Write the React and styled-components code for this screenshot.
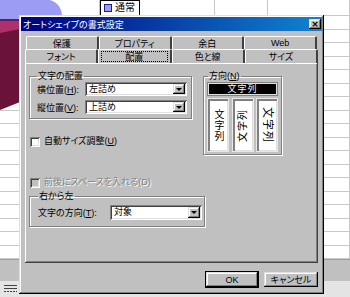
import styled, { createGlobalStyle } from 'styled-components';

const GlobalStyle = createGlobalStyle`
  html, body {
    margin: 0;
    padding: 0;
  }
  body {
    width: 350px;
    height: 297px;
    overflow: hidden;
    background: #fff;
    font-family: 'Liberation Sans', 'Noto Sans CJK JP', sans-serif;
    font-feature-settings: "palt";
  }
`;

const raised = `
  box-shadow: inset -1px -1px #000, inset 1px 1px #dfdfdf,
    inset -2px -2px #808080, inset 2px 2px #fff;
`;

const sunken = `
  box-shadow: inset 1px 1px #808080, inset -1px -1px #fff,
    inset 2px 2px #404040, inset -2px -2px #dfdfdf;
`;

const Screen = styled.div`
  position: relative;
  width: 350px;
  height: 297px;
  overflow: hidden;
  display: flex;
  flex-direction: column;
`;

const SheetGrid = styled.div`
  display: grid;
  grid-template-columns: 100px 40px 75px 53px 82px;
  grid-template-rows: 16px repeat(18, 13.5px);
`;

const Cell = styled.div`
  box-sizing: border-box;
  border-right: 1px solid #c8c8c8;
  border-bottom: 1px solid #c8c8c8;
`;

const StyleCell = styled.div`
  box-sizing: border-box;
  border: 1px solid #000;
  display: flex;
  align-items: center;
  gap: 3px;
  padding-left: 3px;
  font-size: 10px;
  line-height: 1;
  color: #000;
`;

const Swatch = styled.span`
  width: 6px;
  height: 6px;
  border: 1px solid #202080;
  background: #9c9cff;
`;

const SheetTabs = styled.div`
  height: 21px;
  background: #c0c0c0;
  border-top: 1px solid #a0a0a0;
`;

const StatusBar = styled.div`
  flex: 1;
  background: #e4e4e4;
  display: flex;
  align-items: center;
  padding-left: 4px;
`;

const ShapeLayer = styled.div`
  position: absolute;
  left: 0;
  top: 0;
  width: 64px;
  height: 120px;
  z-index: 1;
  line-height: 0;
`;

const Dialog = styled.div`
  position: absolute;
  z-index: 2;
  left: 19px;
  top: 15px;
  width: 305px;
  height: 279px;
  box-sizing: border-box;
  padding: 2px;
  background: #c0c0c0;
  display: flex;
  flex-direction: column;
  font-size: 9px;
  ${raised}
`;

const TitleBar = styled.div`
  height: 14px;
  background: linear-gradient(90deg, #000080, #1084d0);
  color: #fff;
  font-size: 9px;
  display: flex;
  align-items: center;
  justify-content: space-between;
  padding-left: 2px;
`;

const CloseButton = styled.div`
  width: 12px;
  height: 10px;
  margin-right: 1px;
  background: #c0c0c0;
  color: #000;
  font: bold 9px 'DejaVu Sans', sans-serif;
  display: flex;
  align-items: center;
  justify-content: center;
  ${raised}
`;

const Body = styled.div`
  flex: 1;
  padding: 5px 4px 0;
  display: flex;
  flex-direction: column;
`;

const TabRow = styled.div`
  display: flex;
  height: ${({ $h }) => $h}px;
  margin: 0 ${({ $inset }) => $inset}px;
`;

const Tab = styled.div`
  flex: 1;
  box-sizing: border-box;
  border-top: 1px solid #fff;
  border-left: 1px solid #fff;
  border-right: 2px solid #404040;
  border-radius: 2px 2px 0 0;
  font-size: 9px;
  color: #000;
  display: flex;
  align-items: center;
  justify-content: center;
`;

const FocusLabel = styled.span`
  box-sizing: border-box;
  width: calc(100% - 4px);
  height: 11px;
  border: 1px dotted #000;
  display: flex;
  align-items: center;
  justify-content: center;
`;

const Panel = styled.div`
  height: 200px;
  box-sizing: border-box;
  padding: 7px 4px 0;
  box-shadow: inset -1px -1px #404040, inset 1px 1px #fff,
    inset -2px -2px #808080;
  display: flex;
  flex-direction: column;
`;

const TopRow = styled.div`
  display: flex;
  gap: 11px;
  align-items: flex-start;
`;

const Column = styled.div`
  display: flex;
  flex-direction: column;
  width: ${({ $w }) => $w}px;
`;

const Group = styled.fieldset`
  margin: ${({ $mt }) => $mt || 0}px 0 0;
  min-width: 0;
  width: ${({ $w }) => $w}px;
  box-sizing: border-box;
  padding: ${({ $pad }) => $pad};
  border: 1px solid #808080;
  box-shadow: 1px 1px 0 #fff, inset 1px 1px 0 #fff;
  display: flex;
  flex-direction: column;
  gap: ${({ $gap }) => $gap || 0}px;
`;

const Legend = styled.legend`
  font-size: 9px;
  line-height: 12px;
  padding: 0 1px;
  color: #000;
`;

const FieldRow = styled.div`
  display: flex;
  align-items: center;
  height: ${({ $h }) => $h}px;
`;

const FieldLabel = styled.span`
  width: ${({ $w }) => $w}px;
  font-size: 9px;
  color: #000;
  white-space: nowrap;
`;

const Select = styled.div`
  flex: 1;
  align-self: stretch;
  box-sizing: border-box;
  padding: 2px;
  background: #fff;
  display: flex;
  align-items: center;
  ${sunken}
`;

const SelectText = styled.span`
  flex: 1;
  font-size: 9px;
  line-height: 1;
  padding-left: 2px;
  color: #000;
`;

const ArrowButton = styled.span`
  width: 12px;
  align-self: stretch;
  background: #c0c0c0;
  display: flex;
  align-items: center;
  justify-content: center;
  ${raised}
  &::after {
    content: '';
    border-left: 3px solid transparent;
    border-right: 3px solid transparent;
    border-top: 3px solid #000;
  }
`;

const CheckRow = styled.label`
  display: flex;
  align-items: center;
  gap: 4px;
  margin-top: ${({ $mt }) => $mt}px;
  margin-left: 1px;
  height: 11px;
  line-height: 11px;
  font-size: 9px;
  color: ${({ $disabled }) => ($disabled ? '#808080' : '#000')};
  text-shadow: ${({ $disabled }) => ($disabled ? '1px 1px 0 #fff' : 'none')};
`;

const CheckBox = styled.span`
  width: 10px;
  height: 10px;
  box-sizing: border-box;
  background: ${({ $disabled }) => ($disabled ? '#c0c0c0' : '#fff')};
  ${sunken}
`;

const BlackBar = styled.div`
  margin-top: 1px;
  height: 12px;
  box-sizing: border-box;
  background: #000;
  color: #fff;
  font-size: 9px;
  line-height: 1;
  border: 1px solid #dfdfdf;
  outline: 1px solid #808080;
  display: flex;
  align-items: center;
  justify-content: center;
  letter-spacing: 1px;
`;

const Orientations = styled.div`
  margin-top: 4px;
  height: 52px;
  display: flex;
  justify-content: space-between;
`;

const OrientBox = styled.div`
  width: 20px;
  box-sizing: border-box;
  background: #fff;
  display: flex;
  align-items: center;
  justify-content: center;
  box-shadow: inset 2px 2px #808080, inset -1px -1px #dfdfdf,
    0 0 0 1px #e8e8e8;
`;

const VerticalText = styled.span`
  writing-mode: vertical-rl;
  text-orientation: ${({ $upright }) => ($upright ? 'upright' : 'sideways')};
  transform: rotate(${({ $turn }) => $turn || 0}deg);
  font-size: ${({ $size }) => $size}px;
  letter-spacing: 1px;
  color: #000;
  line-height: 1;
`;

const Buttons = styled.div`
  display: flex;
  justify-content: flex-end;
  gap: 6px;
  margin-top: 9px;
`;

const Button = styled.div`
  width: ${({ $w }) => $w}px;
  height: 15px;
  box-sizing: border-box;
  background: #c0c0c0;
  font-size: 9px;
  color: #000;
  display: flex;
  align-items: center;
  justify-content: center;
  ${raised}
  outline: ${({ $default }) => ($default ? '1px solid #000' : 'none')};
`;

const rows = Array.from({ length: 19 });
const cols = Array.from({ length: 5 });

function Sheet() {
  return (
    <SheetGrid>
      {rows.map((_, r) =>
        cols.map((__, c) =>
          r === 0 && c === 1 ? (
            <StyleCell key={`${r}-${c}`}>
              <Swatch />
              通常
            </StyleCell>
          ) : (
            <Cell key={`${r}-${c}`} />
          )
        )
      )}
    </SheetGrid>
  );
}

export default function App() {
  return (
    <>
      <GlobalStyle />
      <Screen>
        <Sheet />
        <SheetTabs />
        <StatusBar>
          <svg width="13" height="9" viewBox="0 0 13 9">
            <rect x="0" y="0" width="13" height="1" fill="#404040" />
            <rect x="0" y="3" width="13" height="1" fill="#404040" />
            <path d="M0 6.5h13" stroke="#404040" strokeDasharray="2 1" />
          </svg>
        </StatusBar>

        <ShapeLayer>
          <svg width="64" height="120" viewBox="0 0 64 120">
            <path d="M0 0 H50 Q63 4 62 20 H0 Z" fill="#9c9cf4" />
            <rect x="0" y="19" width="20" height="2" fill="#5a2060" />
            <rect x="0" y="21" width="20" height="14" fill="#b0306e" />
            <path d="M0 33 L20 29 L20 102 L0 110 Z" fill="#6b1238" />
          </svg>
        </ShapeLayer>

        <Dialog>
          <TitleBar>
            オートシェイプの書式設定
            <CloseButton>×</CloseButton>
          </TitleBar>
          <Body>
            <TabRow $h={13} $inset={1}>
              <Tab>保護</Tab>
              <Tab>プロパティ</Tab>
              <Tab>余白</Tab>
              <Tab>Web</Tab>
            </TabRow>
            <TabRow $h={14} $inset={0}>
              <Tab>フォント</Tab>
              <Tab>
                <FocusLabel>配置</FocusLabel>
              </Tab>
              <Tab>色と線</Tab>
              <Tab>サイズ</Tab>
            </TabRow>
            <Panel>
              <TopRow>
                <Column $w={163}>
                  <Group $w={163} $pad="0 4px 4px 7px" $gap={4}>
                    <Legend>文字の配置</Legend>
                    <FieldRow $h={14}>
                      <FieldLabel $w={48}>横位置(<u>H</u>):</FieldLabel>
                      <Select>
                        <SelectText>左詰め</SelectText>
                        <ArrowButton />
                      </Select>
                    </FieldRow>
                    <FieldRow $h={14}>
                      <FieldLabel $w={48}>縦位置(<u>V</u>):</FieldLabel>
                      <Select>
                        <SelectText>上詰め</SelectText>
                        <ArrowButton />
                      </Select>
                    </FieldRow>
                  </Group>
                  <CheckRow $mt={17}>
                    <CheckBox />
                    <span>自動サイズ調整(<u>U</u>)</span>
                  </CheckRow>
                </Column>
                <Group $w={79} $pad="0 4px 3px 4px">
                  <Legend>方向(<u>N</u>)</Legend>
                  <BlackBar>文字列</BlackBar>
                  <Orientations>
                    <OrientBox>
                      <VerticalText $upright $size={10}>文字列</VerticalText>
                    </OrientBox>
                    <OrientBox>
                      <VerticalText $turn={180} $size={10}>文字列</VerticalText>
                    </OrientBox>
                    <OrientBox>
                      <VerticalText $size={11}>文字列</VerticalText>
                    </OrientBox>
                  </Orientations>
                </Group>
              </TopRow>
              <CheckRow $mt={22} $disabled>
                <CheckBox $disabled />
                <span>前後にスペースを入れる(D)</span>
              </CheckRow>
              <Group $w={176} $mt={2} $pad="3px 2px 6px 8px">
                <Legend>右から左</Legend>
                <FieldRow $h={15}>
                  <FieldLabel $w={72}>文字の方向(<u>T</u>):</FieldLabel>
                  <Select>
                    <SelectText>対象</SelectText>
                    <ArrowButton />
                  </Select>
                </FieldRow>
              </Group>
            </Panel>
            <Buttons>
              <Button $w={52} $default>OK</Button>
              <Button $w={54}>キャンセル</Button>
            </Buttons>
          </Body>
        </Dialog>
      </Screen>
    </>
  );
}
